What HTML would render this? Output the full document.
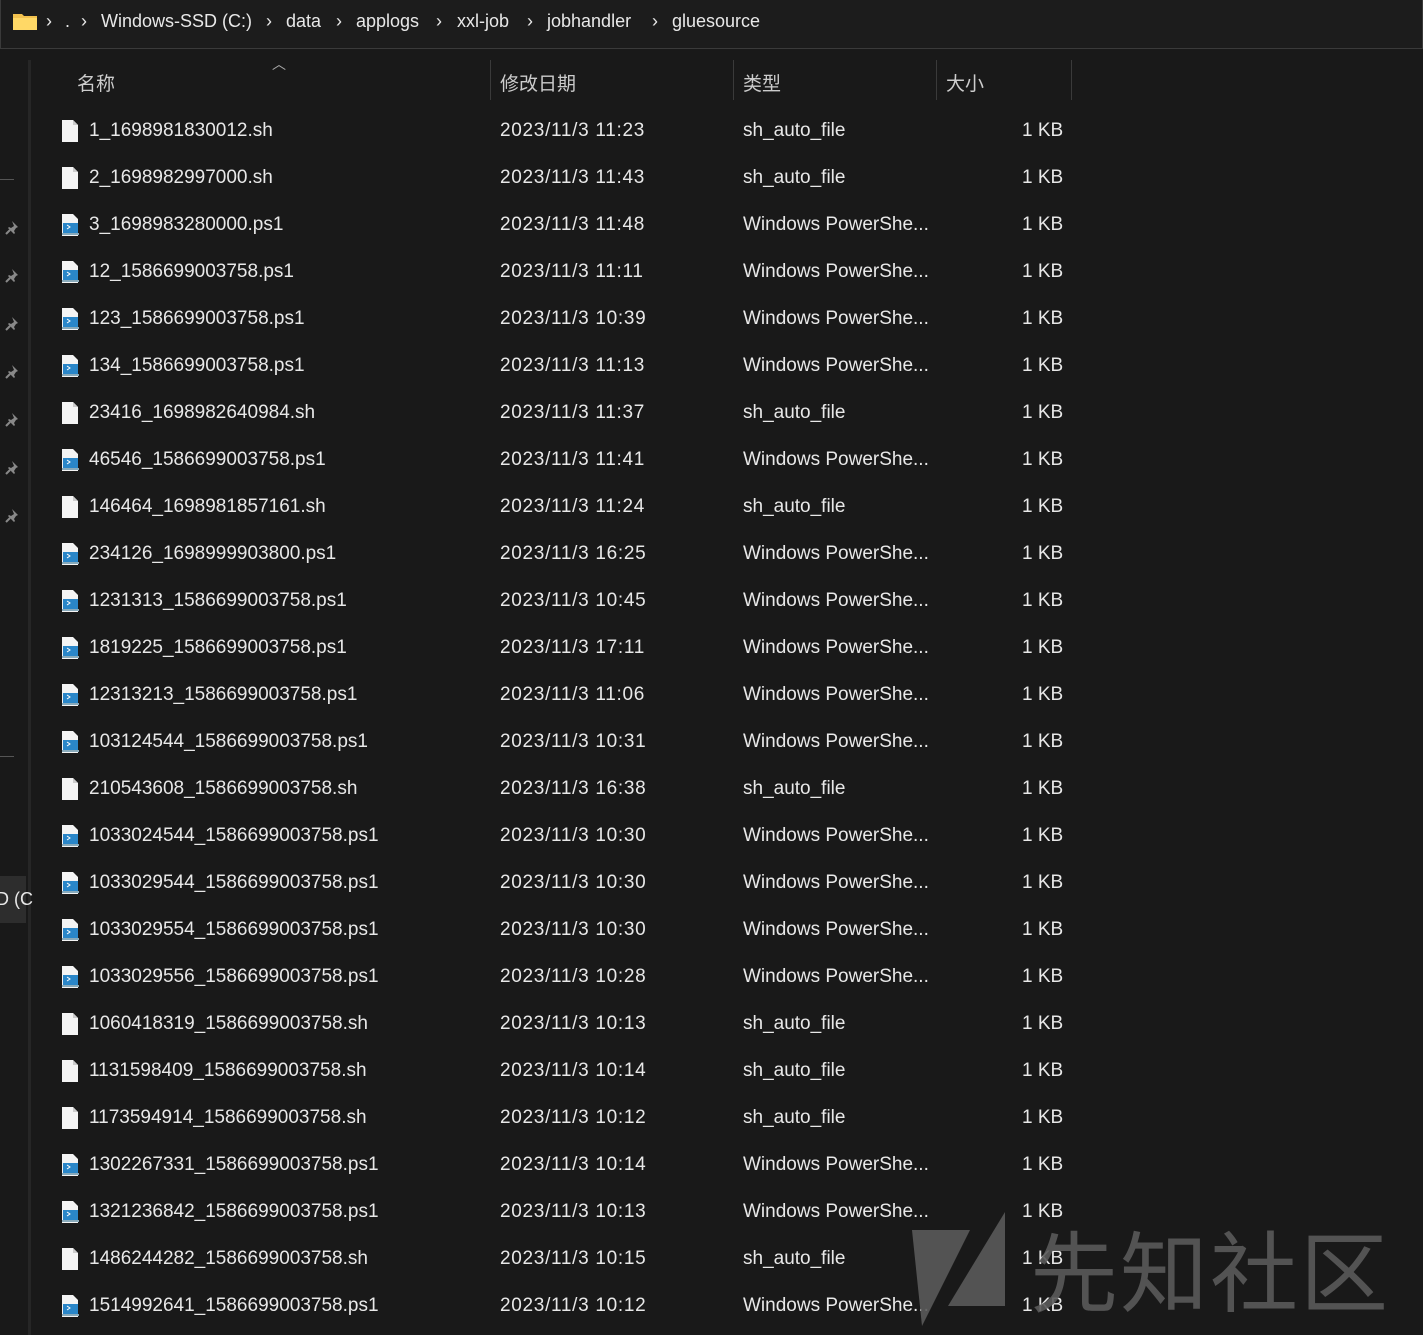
<!DOCTYPE html>
<html><head><meta charset="utf-8"><style>
*{margin:0;padding:0;box-sizing:border-box}
body{width:1423px;height:1335px;background:#191919;color:#e8e8e8;font-family:"Liberation Sans","Noto Sans CJK SC",sans-serif;font-size:19px;position:relative;overflow:hidden}
.addr{position:absolute;left:0;top:0;width:1423px;height:49px;border:1px solid #3a3a3a;border-top:none;background:#1c1c1c}
.addr span{position:absolute;top:11px;font-size:18px}
.t{position:absolute;white-space:nowrap}
.d{letter-spacing:.7px}
.vl{position:absolute;top:60px;width:1px;height:40px;background:#3a3a3a}
.fi{position:absolute;left:61px;width:18px;height:22px}
.pin{position:absolute;left:5px}
</style></head><body>
<div class="addr">
<svg style="position:absolute;left:12px;top:12px" width="24" height="18"><path d="M0 2h9l2 2h13v14H0z" fill="#f2c14e"/><path d="M0 6h24v12H0z" fill="#ffd866"/></svg>
<span style="left:45px">›</span><span style="left:64px">.</span><span style="left:80px">›</span>
<span style="left:100px">Windows-SSD (C:)</span><span style="left:265px">›</span>
<span style="left:285px">data</span><span style="left:335px">›</span>
<span style="left:355px">applogs</span><span style="left:435px">›</span>
<span style="left:456px">xxl-job</span><span style="left:526px">›</span>
<span style="left:546px">jobhandler</span><span style="left:651px">›</span>
<span style="left:671px">gluesource</span>
</div>
<div style="position:absolute;left:28px;top:60px;width:3px;height:1275px;background:#262626"></div>
<div style="position:absolute;left:0;top:179px;width:14px;height:1px;background:#555"></div>
<div style="position:absolute;left:0;top:756px;width:14px;height:1px;background:#555"></div>
<div style="position:absolute;left:0;top:876px;width:26px;height:47px;background:#2d2d2d"></div>
<div class="t" style="left:-4px;top:889px;font-size:18px">D (C</div>
<svg width="0" height="0" style="position:absolute"><defs>
<g id="pn"><path d="M7 1l6 6-2 1-2 3 1 2-1 1-6-6 1-1 2 1 3-2z" fill="#888"/><path d="M5 10l-4 4" stroke="#888" stroke-width="2"/></g>
<g id="sh"><path d="M1 0h11l5 5v17H1z" fill="#f4f4f4"/><path d="M12 0v5h5" fill="#ccc"/></g>
<g id="ps"><path d="M1 0h11l5 5v17H1z" fill="#f4f4f4"/><rect x="2" y="9" width="15" height="10" fill="#2a86c8"/><path d="M6 11l3 2-3 2" stroke="#fff" fill="none"/><rect x="1" y="19" width="17" height="2" fill="#8ab"/></g>
</defs></svg>
<svg class="pin" style="top:220px" width="16" height="16"><use href="#pn"/></svg>
<svg class="pin" style="top:268px" width="16" height="16"><use href="#pn"/></svg>
<svg class="pin" style="top:316px" width="16" height="16"><use href="#pn"/></svg>
<svg class="pin" style="top:364px" width="16" height="16"><use href="#pn"/></svg>
<svg class="pin" style="top:412px" width="16" height="16"><use href="#pn"/></svg>
<svg class="pin" style="top:460px" width="16" height="16"><use href="#pn"/></svg>
<svg class="pin" style="top:508px" width="16" height="16"><use href="#pn"/></svg>
<div class="t" style="left:77px;top:69px;color:#ccc">名称</div>
<div class="t" style="left:272px;top:54px;color:#aaa;font-size:14px">︿</div>
<div class="t" style="left:500px;top:69px;color:#ccc">修改日期</div>
<div class="t" style="left:743px;top:69px;color:#ccc">类型</div>
<div class="t" style="left:946px;top:69px;color:#ccc">大小</div>
<div class="vl" style="left:490px"></div><div class="vl" style="left:733px"></div><div class="vl" style="left:936px"></div><div class="vl" style="left:1071px"></div>
<div id="rows">
<div style="position:absolute;left:0;top:120px"><svg class="fi" style="top:0;left:61px"><use href="#sh"/></svg><span class="t" style="left:89px">1_1698981830012.sh</span><span class="t d" style="left:500px">2023/11/3 11:23</span><span class="t" style="left:743px">sh_auto_file</span><span class="t" style="left:1022px">1 KB</span></div>
<div style="position:absolute;left:0;top:167px"><svg class="fi" style="top:0;left:61px"><use href="#sh"/></svg><span class="t" style="left:89px">2_1698982997000.sh</span><span class="t d" style="left:500px">2023/11/3 11:43</span><span class="t" style="left:743px">sh_auto_file</span><span class="t" style="left:1022px">1 KB</span></div>
<div style="position:absolute;left:0;top:214px"><svg class="fi" style="top:0;left:61px"><use href="#ps"/></svg><span class="t" style="left:89px">3_1698983280000.ps1</span><span class="t d" style="left:500px">2023/11/3 11:48</span><span class="t" style="left:743px">Windows PowerShe...</span><span class="t" style="left:1022px">1 KB</span></div>
<div style="position:absolute;left:0;top:261px"><svg class="fi" style="top:0;left:61px"><use href="#ps"/></svg><span class="t" style="left:89px">12_1586699003758.ps1</span><span class="t d" style="left:500px">2023/11/3 11:11</span><span class="t" style="left:743px">Windows PowerShe...</span><span class="t" style="left:1022px">1 KB</span></div>
<div style="position:absolute;left:0;top:308px"><svg class="fi" style="top:0;left:61px"><use href="#ps"/></svg><span class="t" style="left:89px">123_1586699003758.ps1</span><span class="t d" style="left:500px">2023/11/3 10:39</span><span class="t" style="left:743px">Windows PowerShe...</span><span class="t" style="left:1022px">1 KB</span></div>
<div style="position:absolute;left:0;top:355px"><svg class="fi" style="top:0;left:61px"><use href="#ps"/></svg><span class="t" style="left:89px">134_1586699003758.ps1</span><span class="t d" style="left:500px">2023/11/3 11:13</span><span class="t" style="left:743px">Windows PowerShe...</span><span class="t" style="left:1022px">1 KB</span></div>
<div style="position:absolute;left:0;top:402px"><svg class="fi" style="top:0;left:61px"><use href="#sh"/></svg><span class="t" style="left:89px">23416_1698982640984.sh</span><span class="t d" style="left:500px">2023/11/3 11:37</span><span class="t" style="left:743px">sh_auto_file</span><span class="t" style="left:1022px">1 KB</span></div>
<div style="position:absolute;left:0;top:449px"><svg class="fi" style="top:0;left:61px"><use href="#ps"/></svg><span class="t" style="left:89px">46546_1586699003758.ps1</span><span class="t d" style="left:500px">2023/11/3 11:41</span><span class="t" style="left:743px">Windows PowerShe...</span><span class="t" style="left:1022px">1 KB</span></div>
<div style="position:absolute;left:0;top:496px"><svg class="fi" style="top:0;left:61px"><use href="#sh"/></svg><span class="t" style="left:89px">146464_1698981857161.sh</span><span class="t d" style="left:500px">2023/11/3 11:24</span><span class="t" style="left:743px">sh_auto_file</span><span class="t" style="left:1022px">1 KB</span></div>
<div style="position:absolute;left:0;top:543px"><svg class="fi" style="top:0;left:61px"><use href="#ps"/></svg><span class="t" style="left:89px">234126_1698999903800.ps1</span><span class="t d" style="left:500px">2023/11/3 16:25</span><span class="t" style="left:743px">Windows PowerShe...</span><span class="t" style="left:1022px">1 KB</span></div>
<div style="position:absolute;left:0;top:590px"><svg class="fi" style="top:0;left:61px"><use href="#ps"/></svg><span class="t" style="left:89px">1231313_1586699003758.ps1</span><span class="t d" style="left:500px">2023/11/3 10:45</span><span class="t" style="left:743px">Windows PowerShe...</span><span class="t" style="left:1022px">1 KB</span></div>
<div style="position:absolute;left:0;top:637px"><svg class="fi" style="top:0;left:61px"><use href="#ps"/></svg><span class="t" style="left:89px">1819225_1586699003758.ps1</span><span class="t d" style="left:500px">2023/11/3 17:11</span><span class="t" style="left:743px">Windows PowerShe...</span><span class="t" style="left:1022px">1 KB</span></div>
<div style="position:absolute;left:0;top:684px"><svg class="fi" style="top:0;left:61px"><use href="#ps"/></svg><span class="t" style="left:89px">12313213_1586699003758.ps1</span><span class="t d" style="left:500px">2023/11/3 11:06</span><span class="t" style="left:743px">Windows PowerShe...</span><span class="t" style="left:1022px">1 KB</span></div>
<div style="position:absolute;left:0;top:731px"><svg class="fi" style="top:0;left:61px"><use href="#ps"/></svg><span class="t" style="left:89px">103124544_1586699003758.ps1</span><span class="t d" style="left:500px">2023/11/3 10:31</span><span class="t" style="left:743px">Windows PowerShe...</span><span class="t" style="left:1022px">1 KB</span></div>
<div style="position:absolute;left:0;top:778px"><svg class="fi" style="top:0;left:61px"><use href="#sh"/></svg><span class="t" style="left:89px">210543608_1586699003758.sh</span><span class="t d" style="left:500px">2023/11/3 16:38</span><span class="t" style="left:743px">sh_auto_file</span><span class="t" style="left:1022px">1 KB</span></div>
<div style="position:absolute;left:0;top:825px"><svg class="fi" style="top:0;left:61px"><use href="#ps"/></svg><span class="t" style="left:89px">1033024544_1586699003758.ps1</span><span class="t d" style="left:500px">2023/11/3 10:30</span><span class="t" style="left:743px">Windows PowerShe...</span><span class="t" style="left:1022px">1 KB</span></div>
<div style="position:absolute;left:0;top:872px"><svg class="fi" style="top:0;left:61px"><use href="#ps"/></svg><span class="t" style="left:89px">1033029544_1586699003758.ps1</span><span class="t d" style="left:500px">2023/11/3 10:30</span><span class="t" style="left:743px">Windows PowerShe...</span><span class="t" style="left:1022px">1 KB</span></div>
<div style="position:absolute;left:0;top:919px"><svg class="fi" style="top:0;left:61px"><use href="#ps"/></svg><span class="t" style="left:89px">1033029554_1586699003758.ps1</span><span class="t d" style="left:500px">2023/11/3 10:30</span><span class="t" style="left:743px">Windows PowerShe...</span><span class="t" style="left:1022px">1 KB</span></div>
<div style="position:absolute;left:0;top:966px"><svg class="fi" style="top:0;left:61px"><use href="#ps"/></svg><span class="t" style="left:89px">1033029556_1586699003758.ps1</span><span class="t d" style="left:500px">2023/11/3 10:28</span><span class="t" style="left:743px">Windows PowerShe...</span><span class="t" style="left:1022px">1 KB</span></div>
<div style="position:absolute;left:0;top:1013px"><svg class="fi" style="top:0;left:61px"><use href="#sh"/></svg><span class="t" style="left:89px">1060418319_1586699003758.sh</span><span class="t d" style="left:500px">2023/11/3 10:13</span><span class="t" style="left:743px">sh_auto_file</span><span class="t" style="left:1022px">1 KB</span></div>
<div style="position:absolute;left:0;top:1060px"><svg class="fi" style="top:0;left:61px"><use href="#sh"/></svg><span class="t" style="left:89px">1131598409_1586699003758.sh</span><span class="t d" style="left:500px">2023/11/3 10:14</span><span class="t" style="left:743px">sh_auto_file</span><span class="t" style="left:1022px">1 KB</span></div>
<div style="position:absolute;left:0;top:1107px"><svg class="fi" style="top:0;left:61px"><use href="#sh"/></svg><span class="t" style="left:89px">1173594914_1586699003758.sh</span><span class="t d" style="left:500px">2023/11/3 10:12</span><span class="t" style="left:743px">sh_auto_file</span><span class="t" style="left:1022px">1 KB</span></div>
<div style="position:absolute;left:0;top:1154px"><svg class="fi" style="top:0;left:61px"><use href="#ps"/></svg><span class="t" style="left:89px">1302267331_1586699003758.ps1</span><span class="t d" style="left:500px">2023/11/3 10:14</span><span class="t" style="left:743px">Windows PowerShe...</span><span class="t" style="left:1022px">1 KB</span></div>
<div style="position:absolute;left:0;top:1201px"><svg class="fi" style="top:0;left:61px"><use href="#ps"/></svg><span class="t" style="left:89px">1321236842_1586699003758.ps1</span><span class="t d" style="left:500px">2023/11/3 10:13</span><span class="t" style="left:743px">Windows PowerShe...</span><span class="t" style="left:1022px">1 KB</span></div>
<div style="position:absolute;left:0;top:1248px"><svg class="fi" style="top:0;left:61px"><use href="#sh"/></svg><span class="t" style="left:89px">1486244282_1586699003758.sh</span><span class="t d" style="left:500px">2023/11/3 10:15</span><span class="t" style="left:743px">sh_auto_file</span><span class="t" style="left:1022px">1 KB</span></div>
<div style="position:absolute;left:0;top:1295px"><svg class="fi" style="top:0;left:61px"><use href="#ps"/></svg><span class="t" style="left:89px">1514992641_1586699003758.ps1</span><span class="t d" style="left:500px">2023/11/3 10:12</span><span class="t" style="left:743px">Windows PowerShe...</span><span class="t" style="left:1022px">1 KB</span></div>
</div>
<svg style="position:absolute;left:910px;top:1210px" width="100" height="120"><path d="M2 20h58L12 116z" fill="#5a5a5a" opacity=".9"/><path d="M95 2v94H38z" fill="#5a5a5a" opacity=".9"/></svg>
<div class="t" style="left:1030px;top:1208px;font-size:88px;color:#5a5a5a;opacity:.9;font-family:'Noto Sans CJK SC',sans-serif;letter-spacing:2px;line-height:120px">先知社区</div>
</body></html>
